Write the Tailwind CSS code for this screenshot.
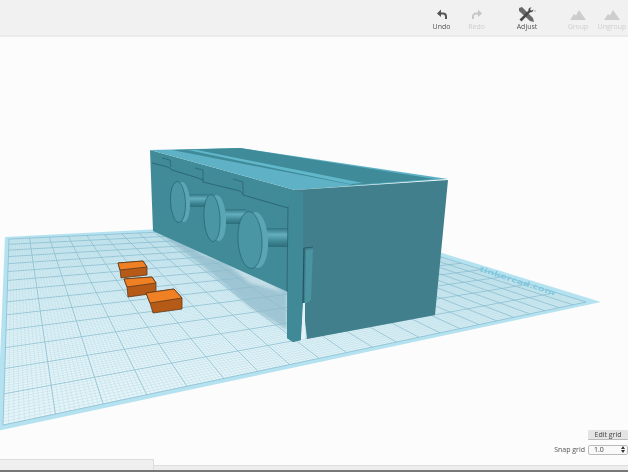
<!DOCTYPE html>
<html>
<head>
    <meta charset="utf-8">
    <script src="https://cdn.jsdelivr.net/npm/@tailwindcss/browser@4"></script>
</head>
<body class="bg-[#fcfcfc] font-['Open_Sans','Noto_Sans',sans-serif] overflow-hidden">
<div class="relative flex flex-col w-[628px] h-[472px]">

    <!-- toolbar -->
    <header class="relative z-10 flex justify-end h-[37px] pt-[9px] bg-[#f1f1f1] border-b-2 border-[#ebebeb] text-[7px] leading-[8px] text-center">
        <div class="flex flex-col items-center w-[35px] text-[#555] blur-[0.3px]">
            <svg width="12" height="12" viewBox="0 0 12 12" fill="none"><path d="M2 4.500h5a3 3 0 0 1 3 3v2.500" stroke="#555" stroke-width="2"/><path d="M5 0.500 1 4.500l4 3.500z" fill="#555"/></svg>
            <span class="mt-[2px]">Undo</span>
        </div>
        <div class="flex flex-col items-center w-[35px] text-[#cfcfcf] blur-[0.3px]">
            <svg width="12" height="12" viewBox="0 0 12 12" fill="none"><path d="M10 4.500H5a3 3 0 0 0-3 3v2.500" stroke="#c6c6c6" stroke-width="2"/><path d="M7 0.500l4 4-4 3.500z" fill="#c6c6c6"/></svg>
            <span class="mt-[2px]">Redo</span>
        </div>
        <div class="flex flex-col items-center w-[50px] ml-[8px] text-[#555] blur-[0.3px]">
            <svg width="18" height="16" viewBox="0 0 18 16" class="-mt-[2px]">
                <!-- pencil -->
                <path d="M1 1l3-1 11 11 1 4-4-1L1 4z" fill="#6a6a6a"/>
                <!-- wrench -->
                <path d="M1.500 12.500 10.500 3.500c-.5-1.500.5-3 3-3.300l-1.500 2 1.500 1.500 2-1.500c-.2 2.500-1.800 3.500-3.300 3L3.500 14.500z" fill="#4a4a4a"/>
                <circle cx="17" cy="4" r="0.800" fill="#aaa"/>
            </svg>
            <span>Adjust</span>
        </div>
        <div class="flex flex-col items-center w-[36px] ml-[8px] text-[#cfcfcf] blur-[0.3px]">
            <svg width="18" height="12" viewBox="0 0 18 12"><path d="M1 11 5 5l2 1.500L10 1l7 10z" fill="#cdcdcd"/></svg>
            <span class="mt-[2px]">Group</span>
        </div>
        <div class="flex flex-col items-center w-[32px] text-[#cfcfcf] blur-[0.3px]">
            <svg width="18" height="12" viewBox="0 0 18 12"><path d="M1 11 5 5l2 1.500L10 1l7 10z" fill="#cdcdcd"/></svg>
            <span class="mt-[2px]">Ungroup</span>
        </div>
    </header>

    <!-- workplane and model -->
    <main class="relative flex-1">
        <svg id="scene" class="absolute left-0 -top-[37px]" width="628" height="472" viewBox="0 0 628 472">
            <defs>
                <linearGradient id="peg" x1="0" y1="0" x2="0" y2="1">
                    <stop offset="0" stop-color="#2f7482"/>
                    <stop offset="0.35" stop-color="#64aebd"/>
                    <stop offset="0.7" stop-color="#3f8795"/>
                    <stop offset="1" stop-color="#2d6d7a"/>
                </linearGradient>
            </defs>

            <g class="blur-[0.6px]">
                <polygon points="5,237 335,220 601,302 -3,431" fill="#b5e2f0"/>
                <polygon points="9,239 335,224 586,302 3,425" fill="#e6f4f8"/>
                <g id="grid"></g>
                <text transform="matrix(0.95 0.31 -0.2 0.62 479 271)" font-size="11" font-weight="700" fill="#7cc8df">tinkercad.com</text>
            </g>

            <!-- shadow on the plate -->
            <g class="blur-[1.5px]">
                <polygon points="157,232 175,229 287,290 287,330 250,307 205,268" fill="#8fb9c9" fill-opacity="0.75"/>
                <polygon points="180,238 208,247 240,266 205,256" fill="#dceef4" fill-opacity="0.75"/>
                <polygon points="225,262 262,277 285,293 250,283" fill="#dceef4" fill-opacity="0.6"/>
            </g>

            <g class="blur-[0.4px]">
                <!-- back and inside wall -->
                <polygon points="150,150 295,190 288,292 153,231" fill="#418a97"/>
                <!-- top rails -->
                <polygon points="150,150 240,148 448,179 295,190" fill="#5fb2c5"/>
                <polygon points="172,150 240,148 435,179 353,185" fill="#3f8b99"/>
                <polygon points="188,150 197,150 363,183 350,184" fill="#62b8cb"/>
                <!-- notched line under the rail -->
                <polyline points="152,163 168,167 171,169 172,170 195,177 203,180 203,182 240,191 243,194 243,195 288,208" fill="none" stroke="#27606d" stroke-width="0.8"/>
                <polyline points="162,158 170,160 171,167" fill="none" stroke="#27606d" stroke-width="0.7"/>
                <polyline points="195,168 203,170 203,180" fill="none" stroke="#27606d" stroke-width="0.7"/>
                <polyline points="233,179 243,182 243,194" fill="none" stroke="#27606d" stroke-width="0.7"/>

                <!-- pegs and discs -->
                <rect x="186" y="194" width="22" height="13" fill="url(#peg)"/>
                <ellipse cx="183" cy="202" rx="7" ry="20" fill="#5ba6b5" transform="rotate(-3 183 202)"/>
                <ellipse cx="178" cy="202" rx="7.500" ry="20.500" fill="#4a96a4" stroke="#1f5a68" stroke-width="0.6" transform="rotate(-3 178 202)"/>

                <rect x="223" y="209" width="23" height="15" fill="url(#peg)"/>
                <ellipse cx="218" cy="218" rx="8" ry="23" fill="#5ba6b5" transform="rotate(-3 218 218)"/>
                <ellipse cx="212" cy="218" rx="8" ry="23.500" fill="#4a96a4" stroke="#1f5a68" stroke-width="0.6" transform="rotate(-3 212 218)"/>

                <rect x="266" y="228" width="23" height="19" fill="url(#peg)"/>
                <ellipse cx="257" cy="240" rx="11" ry="28" fill="#5ba6b5" transform="rotate(-3 257 240)"/>
                <ellipse cx="250" cy="240" rx="12" ry="28.500" fill="#4a96a4" stroke="#1f5a68" stroke-width="0.6" transform="rotate(-3 250 240)"/>

                <!-- end face and left leg -->
                <polygon points="288,207 295,190 448,180 435,315 307,339 303,303 301,340 293,342 287,338" fill="#417f8c"/>
                <polygon points="288,207 295,190 303,192 303,303 301,340 293,342 287,338" fill="#408996"/>
                <!-- slit -->
                <polygon points="303,303 305,303 305,339 301,340" fill="#e4f2f6"/>
                <polygon points="306,250 313,249 311,300 305,304" fill="#4a94a1"/>
                <polyline points="304,248 313,247" fill="none" stroke="#235563" stroke-width="0.8"/>
                <polyline points="304,248 303,303" fill="none" stroke="#235563" stroke-width="1.2"/>
                <polyline points="288,207 287,292" fill="none" stroke="#235563" stroke-width="0.6"/>
            </g>

            <!-- orange blocks -->
            <g stroke="#5d3a1e" stroke-width="0.8" stroke-linejoin="round" class="blur-[0.3px]">
                <polygon points="118,263 120,270 121,278 147,275 147,267 143,261" fill="#b65a17"/>
                <polygon points="118,263 143,261 147,267 120,270" fill="#ef8023"/>
                <polygon points="124,279 127,287 128,297 156,293 156,283 152,277" fill="#b65a17"/>
                <polygon points="124,279 152,277 156,283 127,287" fill="#ef8023"/>
                <polygon points="146,293 150,303 153,313 182,309 182,298 174,289" fill="#b65a17"/>
                <polygon points="146,293 174,289 182,298 150,303" fill="#ef8023"/>
            </g>
        </svg>

        <!-- grid controls -->
        <div class="absolute right-0 bottom-[4px] flex flex-col items-end gap-[5px] text-[7px] text-[#555] blur-[0.3px]">
            <button class="w-[40px] h-[10px] leading-[10px] bg-[#e4e4e4] border-b border-[#bbb] rounded-[1px] text-[#444]">Edit grid</button>
            <div class="flex items-center gap-[3px]">
                <span>Snap grid</span>
                <div class="flex justify-between items-center w-[40px] h-[10px] pl-[5px] pr-[2px] bg-[#f9f9f9] border border-[#bbb] rounded-[2px] text-[#444]">
                    <span>1.0</span>
                    <svg width="4" height="7" viewBox="0 0 4 7"><path d="M2 0l2 3H0zM2 7 0 4h4z" fill="#333"/></svg>
                </div>
            </div>
        </div>
    </main>

    <!-- bottom strip -->
    <footer class="relative z-10 flex items-end h-[13px] border-b-2 border-[#777]">
        <div class="w-[154px] h-[11px] bg-[#efefef] border-t border-r border-[#ddd]"></div>
        <div class="flex-1 h-[5px] bg-[#ededed] border-t border-[#ddd]"></div>
    </footer>
</div>

<script>
    // perspective map from the unit square onto the plate
    function makeMap(p) {
        const dx1 = p[1][0] - p[2][0], dx2 = p[3][0] - p[2][0], sx = p[0][0] - p[1][0] + p[2][0] - p[3][0];
        const dy1 = p[1][1] - p[2][1], dy2 = p[3][1] - p[2][1], sy = p[0][1] - p[1][1] + p[2][1] - p[3][1];
        const det = dx1 * dy2 - dx2 * dy1;
        const g = (sx * dy2 - dx2 * sy) / det;
        const h = (dx1 * sy - sx * dy1) / det;
        const a = p[1][0] - p[0][0] + g * p[1][0], b = p[3][0] - p[0][0] + h * p[3][0];
        const d = p[1][1] - p[0][1] + g * p[1][1], e = p[3][1] - p[0][1] + h * p[3][1];
        return (u, v) => {
            const w = g * u + h * v + 1;
            return [(a * u + b * v + p[0][0]) / w, (d * u + e * v + p[0][1]) / w];
        };
    }

    const map = makeMap([[9, 239], [335, 224], [586, 302], [3, 425]]);
    const grid = document.getElementById('grid');
    const cols = 22, rows = 14, sub = 10;

    function addLine(a, b, major) {
        const l = document.createElementNS('http://www.w3.org/2000/svg', 'line');
        l.setAttribute('x1', a[0]); l.setAttribute('y1', a[1]);
        l.setAttribute('x2', b[0]); l.setAttribute('y2', b[1]);
        l.setAttribute('stroke', major ? '#86bdcf' : '#aed8e5');
        l.setAttribute('stroke-width', major ? 0.8 : 0.4);
        grid.appendChild(l);
    }

    for (const pass of [false, true]) {
        for (let i = 0; i <= cols * sub; i++) {
            const major = i % sub === 0;
            if (major === pass) addLine(map(i / (cols * sub), 0), map(i / (cols * sub), 1), major);
        }
        for (let i = 0; i <= rows * sub; i++) {
            const major = i % sub === 0;
            if (major === pass) addLine(map(0, i / (rows * sub)), map(1, i / (rows * sub)), major);
        }
    }
</script>
</body>
</html>
